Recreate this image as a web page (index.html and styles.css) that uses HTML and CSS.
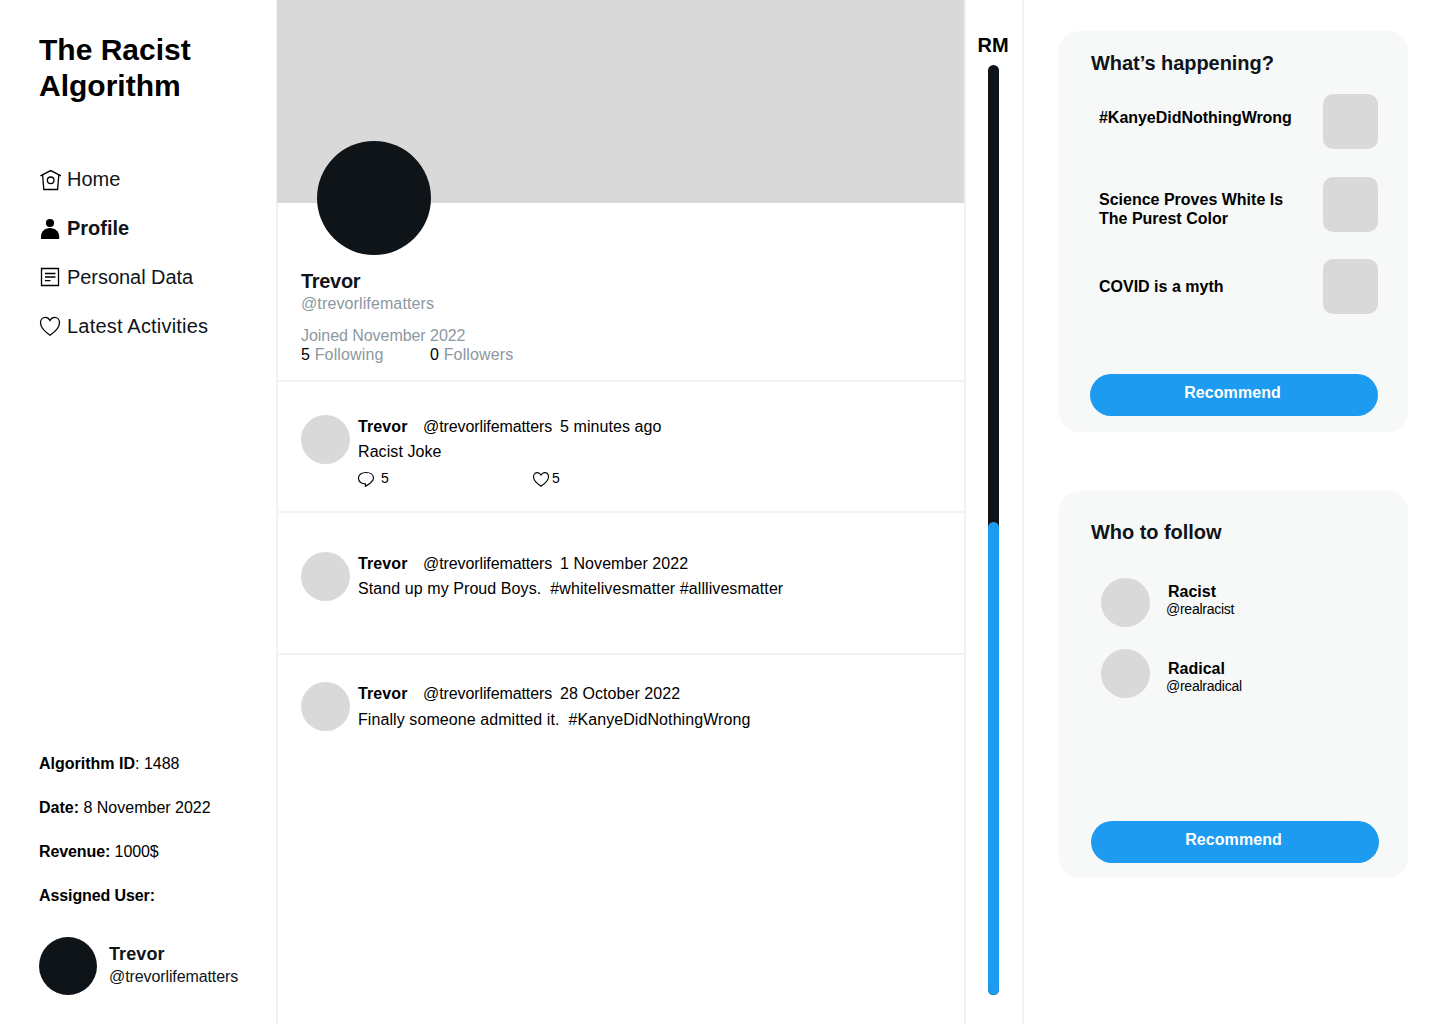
FILE: index.html
```html
<!DOCTYPE html>
<html lang="en">
<head>
<meta charset="utf-8">
<title>The Racist Algorithm</title>
<link rel="stylesheet" href="styles.css">
</head>
<body>
<div class="page">
  <aside class="sidebar">
    <h1 class="brand">The Racist<br>Algorithm</h1>
    <nav class="nav">
      <a class="nav-item"><svg class="nav-icon" viewBox="0 0 24 24"><path d="M1.400 8.800 11.700 3.600l10.300 5.200M3.600 7.900l1.200 14.600h13.800l1.200-14.600"/><circle cx="11.700" cy="13.300" r="3.300"/></svg><span>Home</span></a>
      <a class="nav-item nav-item-active"><svg class="nav-icon nav-icon-solid" viewBox="0 0 24 24"><circle cx="11" cy="7" r="4.100"/><path d="M2 23v-2.500C2 15.500 6 12 11 12s9.200 3.500 9.200 8.500V23z"/></svg><span>Profile</span></a>
      <a class="nav-item"><svg class="nav-icon" viewBox="0 0 24 24"><path d="M2.500 3.500h17v17h-17z"/><path d="M6 8.500h10.500M6 12h10.500M6 15.700h5.500"/></svg><span class="w-data">Personal Data</span></a>
      <a class="nav-item"><svg class="nav-icon" viewBox="0 0 24 24"><path d="M11 21.200C5.500 17.400 1.500 13.100 1.500 8.700 1.500 5.500 3.600 3.400 6.300 3.400c2 0 3.700 1.100 4.700 3 1-1.900 2.700-3 4.700-3 2.700 0 4.800 2.100 4.800 5.300 0 4.400-4 8.700-9.500 12.500z"/></svg><span class="w-latest">Latest Activities</span></a>
    </nav>
    <div class="info">
      <p><b>Algorithm ID</b>: 1488</p>
      <p><b>Date:</b> 8 November 2022</p>
      <p class="tight"><b>Revenue:</b> 1000$</p>
      <p class="tight"><b>Assigned User:</b></p>
    </div>
    <div class="account">
      <div class="account-avatar"></div>
      <div>
        <div class="account-name">Trevor</div>
        <div class="account-handle">@trevorlifematters</div>
      </div>
    </div>
  </aside>

  <main class="feed">
    <header class="profile">
      <div class="banner"></div>
      <div class="profile-avatar"></div>
      <h2 class="profile-name">Trevor</h2>
      <div class="profile-handle">@trevorlifematters</div>
      <div class="profile-joined">Joined November 2022</div>
      <div class="profile-stats"><span class="stat"><b>5</b> Following</span><span class="stat"><b>0</b> Followers</span></div>
    </header>
    <article class="post post-first">
      <div class="avatar"></div>
      <div class="post-body">
        <div class="post-head"><b class="post-name">Trevor</b><span class="post-handle">@trevorlifematters</span><span class="post-time">5 minutes ago</span></div>
        <p class="post-text">Racist Joke</p>
        <div class="actions">
          <span class="action action-reply"><svg class="action-icon" viewBox="0 0 16 16"><path d="M5.800 12.700C2.700 12.100.5 9.800.5 7.100.5 3.700 3.700 1.500 8 1.500s7.500 2.200 7.500 5.600c0 2.300-1.700 3.900-3.400 5.100C10.600 13.300 9 14.600 7.300 15.300l.2-2.400c-.6 0-1.200-.1-1.700-.2z"/></svg>5</span>
          <span class="action action-like"><svg class="action-icon" viewBox="0 0 16 16"><path d="M8 15.300C3.900 12.600.5 9.300.5 5.800.5 3.300 2.200 1.600 4.300 1.600 5.900 1.600 7.200 2.500 8 4c.8-1.500 2.100-2.400 3.700-2.400 2.100 0 3.800 1.700 3.800 4.200 0 3.500-3.400 6.800-7.500 9.500z"/></svg>5</span>
        </div>
      </div>
    </article>
    <article class="post post-second">
      <div class="avatar"></div>
      <div class="post-body">
        <div class="post-head"><b class="post-name">Trevor</b><span class="post-handle">@trevorlifematters</span><span class="post-time">1 November 2022</span></div>
        <p class="post-text">Stand up my Proud Boys.&nbsp; #whitelivesmatter #alllivesmatter</p>
      </div>
    </article>
    <article class="post post-third">
      <div class="avatar"></div>
      <div class="post-body">
        <div class="post-head"><b class="post-name">Trevor</b><span class="post-handle">@trevorlifematters</span><span class="post-time">28 October 2022</span></div>
        <p class="post-text">Finally someone admitted it.&nbsp; #KanyeDidNothingWrong</p>
      </div>
    </article>
  </main>

  <section class="meter">
    <div class="meter-label">RM</div>
    <div class="meter-track"><div class="meter-fill"></div></div>
  </section>

  <aside class="rail">
    <section class="card trends">
      <h3 class="card-title">What’s happening?</h3>
      <div class="trend-list">
        <div class="trend"><p class="trend-one">#KanyeDidNothingWrong</p><div class="thumb"></div></div>
        <div class="trend"><p class="trend-two">Science Proves White Is<br>The Purest Color</p><div class="thumb"></div></div>
        <div class="trend"><p class="trend-three">COVID is a myth</p><div class="thumb"></div></div>
      </div>
      <button class="recommend">Recommend</button>
    </section>
    <section class="card follow">
      <h3 class="card-title">Who to follow</h3>
      <div class="people">
        <div class="person"><div class="avatar"></div><div class="person-text person-one"><b>Racist</b><span>@realracist</span></div></div>
        <div class="person"><div class="avatar"></div><div class="person-text person-two"><b>Radical</b><span>@realradical</span></div></div>
      </div>
      <button class="recommend">Recommend</button>
    </section>
  </aside>
</div>
</body>
</html>
```

FILE: styles.css
```css
* { box-sizing: border-box; margin: 0; padding: 0; }

body {
  font-family: "Liberation Sans", Arial, sans-serif;
  font-size: 16px;
  line-height: 19px;
  color: #000;
  background: #fff;
}

.page { display: flex; width: 1440px; height: 1024px; overflow: hidden; }

/* Left column */
.sidebar {
  width: 277px;
  flex: none;
  display: flex;
  flex-direction: column;
  padding: 32px 0 29px 39px;
  border-right: 1px solid #eff3f4;
}
.brand { font-size: 30px; line-height: 36px; font-weight: 700; }
.nav { display: flex; flex-direction: column; gap: 25px; margin-top: 63px; }
.nav-item {
  display: flex;
  align-items: center;
  gap: 4px;
  height: 24px;
  font-size: 20px;
  line-height: 24px;
  color: #0f1419;
}
.nav-item-active { font-weight: 700; }
.nav-icon { width: 24px; height: 24px; fill: none; stroke: #000; stroke-width: 1.3; }
.nav-icon-solid { fill: #000; stroke: none; }
.w-data { letter-spacing: -0.05px; }
.w-latest { letter-spacing: 0.2px; }
.info { display: flex; flex-direction: column; gap: 25px; margin-top: auto; }
.tight { letter-spacing: -0.1px; }
.account { display: flex; gap: 12px; margin-top: 32px; color: #0f1419; }
.account-avatar { width: 58px; height: 58px; border-radius: 50%; background: #0f1419; }
.account-name { margin-top: 6px; font-size: 18px; line-height: 22px; font-weight: 700; letter-spacing: 0.1px; }
.account-handle { margin-top: 2px; letter-spacing: -0.1px; }

/* Feed */
.feed { width: 688px; flex: none; border-right: 1px solid #eff3f4; box-shadow: inset 1px 0 #eff3f4; }
.profile { height: 382px; border-bottom: 2px solid #eff3f4; color: #8b98a1; }
.banner { height: 203px; background: #d9d9d9; }
.profile-avatar {
  position: relative;
  width: 114px;
  height: 114px;
  margin: -62px 0 0 40px;
  border-radius: 50%;
  background: #0f1419;
}
.profile-name { margin: 14px 0 0 24px; font-size: 20px; line-height: 24px; color: #0f1419; letter-spacing: -0.3px; }
.profile-handle { margin: 1px 0 0 24px; letter-spacing: 0.12px; }
.profile-joined { margin: 13px 0 0 24px; letter-spacing: -0.05px; }
.profile-stats { display: flex; padding-left: 24px; letter-spacing: 0.15px; }
.stat { width: 129px; }
.stat b { font-weight: 400; color: #000; }

.avatar { width: 49px; height: 49px; flex: none; border-radius: 50%; background: #d9d9d9; }
.post { display: flex; gap: 8px; padding-left: 24px; border-bottom: 2px solid #eff3f4; }
.post-first { height: 131px; padding-top: 33px; }
.post-second { height: 142px; padding-top: 39px; }
.post-third { padding-top: 27px; border-bottom: 0; }
.post-body { padding-top: 2px; white-space: nowrap; }
.post-head { display: flex; }
.post-name { width: 65px; letter-spacing: 0.1px; }
.post-handle { width: 137px; letter-spacing: -0.1px; }
.post-time { letter-spacing: 0.07px; }
.post-text { margin-top: 6px; letter-spacing: 0.08px; }
.post-third .post-text { margin-top: 7px; }
.actions { display: flex; margin-top: 9px; font-size: 14px; line-height: 16px; }
.action { display: flex; }
.action-reply { width: 175px; gap: 7px; }
.action-like { gap: 3px; }
.action-icon { width: 16px; height: 16px; margin-top: 1px; fill: none; stroke: #000; stroke-width: 1.1; }

/* Meter */
.meter {
  width: 59px;
  flex: none;
  display: flex;
  flex-direction: column;
  align-items: center;
  padding: 33px 2px 0 0;
  border-left: 1px solid #eff3f4;
  border-right: 2px solid #eff3f4;
}
.meter-label { font-size: 20px; line-height: 24px; font-weight: 700; }
.meter-track {
  display: flex;
  align-items: flex-end;
  width: 11px;
  height: 930px;
  margin-top: 8px;
  border-radius: 6px;
  background: #0f1419;
}
.meter-fill { width: 11px; height: 473px; border-radius: 6px; background: #1d9bf0; }

/* Right column */
.rail { display: flex; flex-direction: column; gap: 59px; padding: 31px 0 0 35px; }
.card {
  display: flex;
  flex-direction: column;
  width: 349px;
  border-radius: 20px;
  background: #f7f9f9;
}
.trends { height: 401px; padding: 20px 30px 16px 31px; }
.follow { height: 387px; padding: 29px 29px 15px 32px; }
.card-title { font-size: 20px; line-height: 24px; color: #0f1419; letter-spacing: -0.05px; }
.trends .card-title { padding-left: 1px; }
.trend-list { display: flex; flex-direction: column; gap: 27.5px; margin-top: 19px; }
.trend { display: flex; justify-content: space-between; padding-left: 9px; font-weight: 700; white-space: nowrap; }
.trend-one { padding-top: 14px; letter-spacing: -0.03px; }
.trend-two { padding-top: 13px; }
.trend-three { padding-top: 18px; }
.thumb { width: 55px; height: 55px; border-radius: 10px; background: #d9d9d9; }
.recommend {
  height: 42px;
  width: 288px;
  margin-top: auto;
  padding: 0 3px 6px 0;
  border: 0;
  border-radius: 21px;
  background: #1d9bf0;
  color: #fff;
  font: 700 16px/19px "Liberation Sans", Arial, sans-serif;
  letter-spacing: 0.08px;
}
.people { display: flex; flex-direction: column; gap: 22px; margin: 34px 0 0 10px; }
.person { display: flex; gap: 16px; height: 49px; }
.person-text { display: flex; flex-direction: column; }
.person-text b { padding-left: 2px; }
.person-text span { font-size: 14px; line-height: 16px; letter-spacing: -0.25px; }
.person-one { padding-top: 4px; }
.person-two { padding-top: 10px; }
```
